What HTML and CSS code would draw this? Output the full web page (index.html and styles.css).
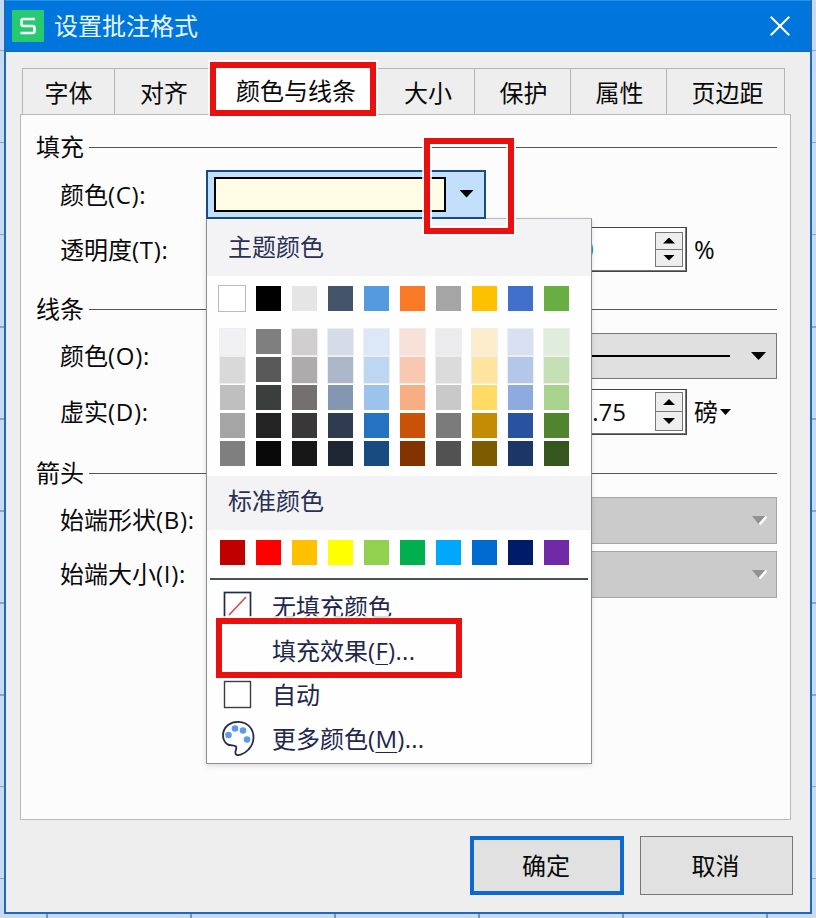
FILE: index.html
```
<!DOCTYPE html>
<html lang="zh-CN">
<head>
<meta charset="utf-8">
<title>设置批注格式</title>
<link rel="stylesheet" href="styles.css">
</head>
<body>
<div class="dialog">
  <header class="titlebar">
    <svg class="logo" viewBox="0 0 32 32"><rect width="32" height="32" rx="1" fill="#27ca70"/><path d="M23 9H11.500Q9.500 9 9.500 11V14Q9.500 16 11.500 16H20.500Q22.500 16 22.500 18V21Q22.500 23 20.500 23H8.500" fill="none" stroke="#fff" stroke-width="2.600"/></svg>
    <h1>设置批注格式</h1>
    <svg class="close" viewBox="0 0 20 20"><path d="M.7 .7 19.300 19.300M19.300 .7 .7 19.300" stroke="#fff" stroke-width="2" fill="none"/></svg>
  </header>
  <nav class="tabs">
    <span class="tab t1">字体</span><span class="tab t2">对齐</span><span class="tab active">颜色与线条</span><span class="tab t4">大小</span><span class="tab t5">保护</span><span class="tab t5">属性</span><span class="tab t7">页边距</span>
  </nav>
  <main class="panel">
    <h2 class="g1">填充</h2>
    <div class="row r1"><label>颜色<span class="key">(C):</span></label>
      <div class="color-field"><div class="color-value"></div><i class="arrow"></i></div></div>
    <div class="row r2"><label>透明度<span class="key">(T):</span></label>
      <div class="spin"><span class="num">0</span><span class="steps"><b><i class="arrow up"></i></b><b><i class="arrow"></i></b></span></div><span class="unit percent">%</span></div>
    <h2 class="g2">线条</h2>
    <div class="row r3"><label>颜色<span class="key">(O):</span></label>
      <div class="select"></div><div class="select line-style"><span class="stroke"></span><i class="arrow"></i></div></div>
    <div class="row r4"><label>虚实<span class="key">(D):</span></label>
      <div class="spin"><span class="num">0.75</span><span class="steps"><b><i class="arrow up"></i></b><b><i class="arrow"></i></b></span></div><span class="unit">磅</span><i class="arrow small"></i></div>
    <h2 class="g3">箭头</h2>
    <div class="row r5"><label>始端形状<span class="key">(B):</span></label><div class="select disabled"><svg viewBox="0 0 17 11"><path d="M1 1H15L7.500 9Z" fill="#929292"/><path d="M15.500 1.500 8.500 9.500" stroke="#fff" stroke-width="2.500"/></svg></div></div>
    <div class="row r6"><label>始端大小<span class="key">(I):</span></label><div class="select disabled"><svg viewBox="0 0 17 11"><path d="M1 1H15L7.500 9Z" fill="#929292"/><path d="M15.500 1.500 8.500 9.500" stroke="#fff" stroke-width="2.500"/></svg></div></div>
  </main>
  <footer class="buttons"><button class="ok">确定</button><button>取消</button></footer>
</div>

<div class="popup">
  <h3>主题颜色</h3>
  <div class="swatches base" id="base"></div>
  <div class="swatches shades" id="shades"></div>
  <h3 class="std-title">标准颜色</h3>
  <div class="swatches standard" id="standard"></div>
  <hr>
  <div class="item"><svg viewBox="0 0 34 34"><rect x="2.500" y="2.500" width="26" height="28" fill="#fff" stroke="#222a4e" stroke-width="1.700"/><path d="M7 25 24 7" stroke="#df4949" stroke-width="1.700"/></svg><span>无填充颜色</span></div>
  <div class="item"><svg viewBox="0 0 34 34"></svg><span>填充效果<span class="menu-key">(<u>F</u>)...</span></span></div>
  <div class="item"><svg viewBox="0 0 34 34"><rect x="2.500" y="3.500" width="26" height="26" fill="#fff" stroke="#3b3b4b" stroke-width="1.400"/></svg><span>自动</span></div>
  <div class="item"><svg viewBox="0 0 34 34"><path transform="translate(0 -2)" d="M14 26.500C15.500 29 12.500 31 13.500 33.500C14.500 37 22 34.500 26.500 29.500C33 23 33 12.500 27.500 6.500C22 .7 12 .4 6 5C-.5 10.500-.5 19.500 5 24C8 26.500 12 24.500 14 26.500Z" fill="#fff" stroke="#222a4e" stroke-width="1.800"/><g fill="#5b9bea"><circle cx="6.500" cy="13" r="3.300"/><circle cx="13" cy="6.500" r="3.300"/><circle cx="21" cy="8.500" r="3.300"/><circle cx="25" cy="17.500" r="3.300"/></g></svg><span>更多颜色<span class="menu-key">(<u>M</u>)...</span></span></div>
</div>
<div class="mark mark-tab"></div>
<div class="mark mark-arrow"></div>
<div class="mark mark-effect"></div>
<script src="palette.js"></script>
</body>
</html>
```
FILE: styles.css
```
* { box-sizing: border-box; }
body {
  margin: 0; width: 816px; height: 918px; overflow: hidden; padding: 0 4px;
  font: 24px/30px "Open Sans", "Noto Sans CJK SC", sans-serif; color: #090909;
  background:
    repeating-linear-gradient(90deg, transparent 0 46px, #7893b5 46px 48px, transparent 48px 144px) 0 914px / 816px 4px no-repeat,
    repeating-linear-gradient(#c6daf2 0 50px, #8ea6c6 50px 51.500px, #c6daf2 51.500px 92px);
}
h1, h2, h3 { margin: 0; font-size: 24px; font-weight: 400; }
.dialog { width: 808px; height: 914px; border: 2px solid #2069b8; border-top: 1px solid #2b91e8; background: #eee; }
.titlebar { height: 51px; background: #0075db; display: flex; align-items: center; padding: 0 20px 0 6px; color: #fff; border-bottom: 1px solid #1767b3; }
.logo { width: 32px; height: 32px; margin-right: 10px; }
.titlebar h1 { flex: 1; color: #e8f7ff; }
.close { width: 20px; height: 20px; }
.tabs { display: flex; height: 62px; padding: 16px 0 0 16px; }
.tab { height: 46px; border: 1px solid #b5b5b5; border-width: 1px 1px 0 0; text-align: center; padding-top: 9px; }
.t1 { width: 93px; border-left-width: 1px; }
.t2 { width: 95px; border-right: 0; padding-left: 3px; }
.active { width: 166px; background: #fff; border: 0; padding: 8px 0 0 6px; }
.t4 { width: 99px; padding-left: 6px; }
.t5 { width: 96px; padding-left: 2px; }
.t7 { width: 118px; padding-left: 4px; }
.panel { margin-left: 14px; width: 771px; height: 706px; border: 1px solid #b9b9b9; background: #fcfcfd; padding: 9px 13px 0 15px; }
.panel h2 { display: flex; align-items: center; height: 48px; gap: 5px; }
.panel h2::after { content: ""; flex: 1; height: 1px; background: #555; }
.panel .g1 { height: 46px; }
.g2 { margin-top: 13px; }
.g3 { margin-top: 14px; }
.row { display: flex; align-items: center; padding-left: 24px; height: 46px; }
.row label { width: 146px; flex: none; white-space: nowrap; }
.key { letter-spacing: .7px; }
.menu-key { letter-spacing: .3px; }
.r1 { height: 49px; }
.r2 { height: 45px; margin-top: 8px; }
.r4 { margin-top: 10px; }
.r5, .r6 { height: 47px; }
.panel .g3 { height: 48px; }
.r6 { margin-top: 7px; }
.r5 label, .r6 label { padding-bottom: 2px; }
.arrow { width: 15px; height: 8px; background: #000; clip-path: polygon(0 0, 100% 0, 50% 100%); }
.up { clip-path: polygon(50% 0, 100% 100%, 0 100%); }
.small { width: 11px; height: 6px; margin-left: 2px; }
.color-field { width: 280px; height: 49px; border: 2px solid #174c87; background: #c2e0fc; padding: 5px 10px 5px 6px; display: flex; align-items: center; justify-content: space-between; }
.color-value { width: 232px; height: 35px; border: 2px solid #000; background: #fffce5; }
.color-field .arrow { margin-top: -2px; }
.spin { width: 481px; height: 100%; border: 1px solid #444; box-shadow: inset -1px -1px #777; background: #fff; display: flex; align-items: center; justify-content: space-between; padding: 3px 3px 4px 0; }
.num { width: 419px; text-align: right; }
.r2 .num { width: 387px; color: #2468ad; }
.steps { width: 28px; height: 35px; border: 1px solid #777; display: flex; flex-direction: column; background: #eee; }
.r4 .steps { height: 39px; }
.steps b { flex: 1; display: flex; align-items: center; justify-content: center; }
.steps b + b { border-top: 1px solid #777; }
.steps .arrow { width: 12px; height: 6px; }
.unit { margin-left: 7px; }
.percent { margin-top: -2px; font-size: 25px; }
.select { width: 280px; height: 100%; border: 1px solid #777; background: #e0e0e1; display: flex; align-items: center; }
.r3 .select { flex: 1; }
.line-style { padding-right: 10px; justify-content: flex-end; }
.stroke { width: 200px; height: 2px; background: #000; margin-right: 21px; }
.disabled { width: 571px; background: #cbcbcb; border-color: #a5a5a5; justify-content: flex-end; padding-right: 8px; }
.disabled svg { width: 17px; height: 11px; }
.buttons { display: flex; justify-content: flex-end; gap: 16px; padding: 16px 17px 0 0; }
button { width: 153px; height: 59px; background: #e1e1e1; border: 1px solid #777; font: inherit; color: #090909; padding: 0 2px 0 0; }
.ok { width: 154px; border: 4px solid #0d68d2; }

.popup { position: absolute; left: 206px; top: 218px; width: 386px; height: 546px; border: 1px solid #8f8f8f; border-top-color: #b8b8b8; background: #fefefe; box-shadow: 0 2px 5px #0002; color: #20274b; }
.color-field { position: relative; z-index: 2; }
.popup h3 { height: 57px; background: #f3f3f5; padding: 13px 21px 0; line-height: 30px; color: #293154; }
.popup .std-title { height: 54px; margin-top: 10px; padding-top: 10px; }
.swatches { display: grid; grid-template-columns: repeat(10, 25px); column-gap: 11px; padding-left: 13px; }
.swatches i { height: 25px; }
.base { padding-top: 10px; }
.base i:first-child { box-shadow: 0 0 0 1px #bbb; margin-left: -1px; }
.shades { padding-top: 18px; row-gap: 3px; }
.shades i:nth-child(-n+20):not(:nth-child(10n+2)) { box-shadow: 0 0 0 1px #d6d6da66; height: 26px; margin-bottom: -1px; }
.standard { padding-top: 10px; }
hr { border: 0; height: 1.500px; background: #47515a; margin: 13px 3px 5px; }
.item { display: flex; align-items: center; height: 44px; padding-left: 15px; }
.item svg { width: 34px; height: 34px; margin-right: 16px; overflow: visible; }
.item u { text-decoration-thickness: 1px; text-underline-offset: 4px; }
.mark { position: absolute; z-index: 3; border: 6px solid #e91010; box-shadow: 0 0 0 2px #fffc, inset 0 0 0 2px #fffc; }
.mark-tab { left: 210px; top: 62px; width: 166px; height: 54px; }
.mark-arrow { left: 424px; top: 138px; width: 90px; height: 96px; }
.mark-effect { left: 216px; top: 618px; width: 246px; height: 60px; }
```
FILE: palette.js
```
const palettes = {
  base: "fff 000 e5e5e6 44546a 5599de f97927 a5a5a5 ffc000 416fcc 6aad43",
  shades: "f1f1f3 7f7f7f d0cecf d5dbe7 dce7f7 f8e1d9 ebebed feedcc d9e0f4 e1eddc " +
    "d9d9da 595959 adabab acb8ca bdd6f1 f8c9b0 dbdbdc fee49d b4c6e9 c5e0b4 " +
    "bfbfbf 3c3e3e 747070 8496b0 9dc3ec f8ae83 c9c9c9 ffda64 8faadf a9d28c " +
    "a5a5a5 232323 393738 2f3c50 2472c1 c95208 7b7b7b c38c02 2953a0 50842f " +
    "7f7f7f 090909 181717 1e2733 184b80 833300 525252 7d5c00 1b3768 35571f",
  standard: "c00000 ff0000 ffc000 ffff00 92d050 00b04f 00a8fb 006bd1 001b68 7029a7"
};
for (const [id, colors] of Object.entries(palettes)) {
  const grid = document.getElementById(id);
  for (const color of colors.split(" ")) {
    const cell = document.createElement("i");
    cell.style.background = "#" + color;
    grid.append(cell);
  }
}
```
